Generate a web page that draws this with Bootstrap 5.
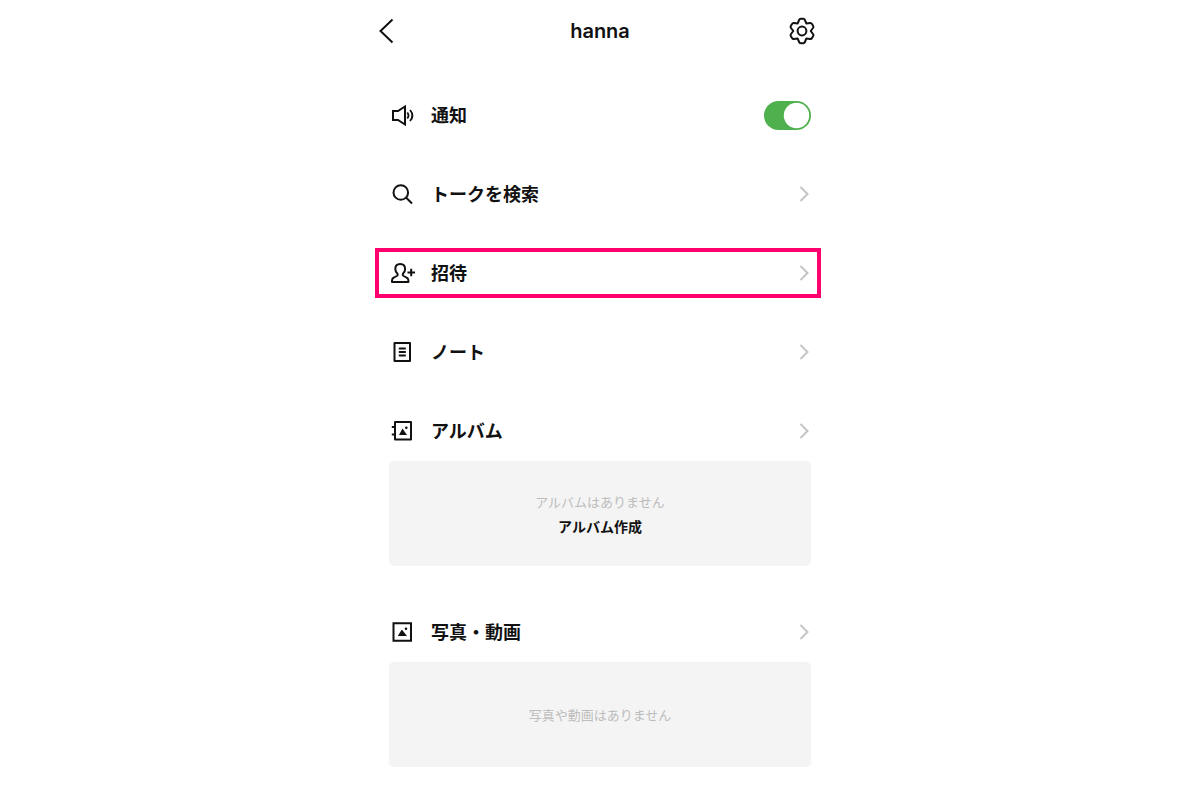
<!DOCTYPE html>
<html lang="ja">
<head>
<meta charset="utf-8">
<meta name="viewport" content="width=device-width, initial-scale=1">
<title>hanna</title>
<link href="https://cdn.jsdelivr.net/npm/bootstrap@5.3.0/dist/css/bootstrap.min.css" rel="stylesheet">
<style>
  body { font-family: "Noto Sans CJK JP", sans-serif; color: #111; background: #fff; }
  .chat-menu { max-width: 450px; }
  .menu-header { display: grid; grid-template-columns: 1fr auto 1fr; height: 62px; }
  .menu-title { font: 600 20px/28px Inter, sans-serif; }
  .icon-button { border: 0; background: none; padding: 0; color: inherit; line-height: 0; }
  .menu-body { padding: 28px 4px 32px 0; }
  .menu-row { display: flex; align-items: center; height: 50px; padding: 0 10px 0 14px; color: #111;
    font-size: 18px; line-height: 26px; font-weight: 600; text-decoration: none; }
  .menu-row > span, .menu-row > label { padding-bottom: 2px; }
  .menu-row + .menu-row { margin-top: 29px; }
  .menu-row.marked { border: 4px solid #ff006e; padding: 0 6px 0 10px; }
  .menu-icon { width: 28px; height: 28px; margin-right: 14px; flex: none; }
  .line { fill: none; stroke: currentColor; stroke-width: 2; }
  .chevron { width: 14px; height: 18px; margin-left: auto; stroke: #c4c4c4; stroke-width: 2; fill: none; }
  .form-check-input.menu-switch { width: 47px; height: 29px; margin: 0 0 0 auto; border: 0; border-radius: 15px; background-position: right center; }
  .form-check-input.menu-switch:checked { background-color: #4fb04e;
    background-image: url("data:image/svg+xml,%3csvg xmlns='http://www.w3.org/2000/svg' viewBox='0 0 29 29'%3e%3ccircle cx='14.5' cy='14.5' r='12.7' fill='white'/%3e%3c/svg%3e"); }
  .empty-panel { margin: 5px 10px 0 14px; min-height: 105px; background: #f4f4f4; border-radius: 5px; }
  .empty-note { font-size: 13px; line-height: 24px; color: #bdbdbd; }
  .create-button { border: 0; background: none; padding: 0; color: #111; font-size: 14px; line-height: 24px; font-weight: 700; }
  .media-group { margin-top: 41px; }
</style>
</head>
<body>
<main class="chat-menu mx-auto">
  <header class="menu-header align-items-center">
    <button class="icon-button text-start ps-1" aria-label="戻る">
      <svg width="15" height="26" viewBox="0 0 15 26"><path class="line" d="M13.5 1.5 1.5 13l12 11.500"/></svg>
    </button>
    <h1 class="menu-title m-0">hanna</h1>
    <button class="icon-button text-end pe-2" aria-label="設定">
      <svg width="30" height="30" viewBox="0 0 30 30"><g class="line" stroke-linejoin="round"><path d="M13.800 2.800h2.400Q17.400 2.800 17.900 4L19.300 7.400 23.200 6.900Q24.400 6.800 25 7.900L26.200 9.900Q26.800 11 26 12L23.700 15 26 18Q26.800 19 26.200 20.100L25 22.100Q24.400 23.200 23.200 23.100L19.300 22.600 17.900 26Q17.400 27.200 16.200 27.200H13.800Q12.600 27.200 12.100 26L10.700 22.600 6.800 23.100Q5.600 23.200 5 22.100L3.800 20.100Q3.200 19 4 18L6.300 15 4 12Q3.200 11 3.800 9.900L5 7.900Q5.600 6.800 6.800 6.900L10.700 7.400 12.100 4Q12.600 2.800 13.800 2.800z"/><circle cx="15" cy="15" r="4.400"/></g></svg>
    </button>
  </header>

  <div class="menu-body">
    <div class="menu-row">
      <svg class="menu-icon" viewBox="0 0 28 28" aria-hidden="true"><g class="line"><path d="M4 10h5l7-4.500v18L9 19H4z"/><path d="M18.300 11.500q2.400 3 0 6M21 9q4.800 5.500 0 11" stroke-width="1.800"/></g></svg>
      <label for="notify">通知</label>
      <input class="form-check-input menu-switch" type="checkbox" role="switch" id="notify" checked>
    </div>
    <a class="menu-row" href="#">
      <svg class="menu-icon" viewBox="0 0 28 28" aria-hidden="true"><g class="line"><circle cx="11.800" cy="12.500" r="7.300"/><path d="m17 17.500 6 6"/></g></svg>
      <span>トークを検索</span>
      <svg class="chevron" viewBox="0 0 14 18" aria-hidden="true"><path d="m3.500 2 7 7-7 7"/></svg>
    </a>
    <a class="menu-row marked" href="#">
      <svg class="menu-icon" viewBox="0 0 28 28" aria-hidden="true"><path class="line" stroke-linejoin="round" d="M3 23v-1.500c0-1.500.5-2.300 2-3l3.500-2v-1.700C7 13.500 6.300 11.800 6.300 10c0-3 1.900-5 4.900-5s4.900 2 4.900 5c0 1.800-.7 3.500-2.200 4.800v1.700l3.500 2c1.500.7 2 1.500 2 3V23z"/><path class="line" d="M18.500 13.500H26M22.200 9.800v7.400"/></svg>
      <span>招待</span>
      <svg class="chevron" viewBox="0 0 14 18" aria-hidden="true"><path d="m3.500 2 7 7-7 7"/></svg>
    </a>
    <a class="menu-row" href="#">
      <svg class="menu-icon" viewBox="0 0 28 28" aria-hidden="true"><path class="line" stroke-linejoin="round" d="M5.500 5h15.500v18H5.500zM9.800 10.500h7M9.800 14h7M9.800 17.500h7"/></svg>
      <span>ノート</span>
      <svg class="chevron" viewBox="0 0 14 18" aria-hidden="true"><path d="m3.500 2 7 7-7 7"/></svg>
    </a>
    <a class="menu-row" href="#">
      <svg class="menu-icon" viewBox="0 0 28 28" aria-hidden="true"><path class="line" stroke-linejoin="round" d="M6 5h16v17.500H6zM2.800 10H6M2.800 17.500H6"/><path d="m10 18 3.500-6.500L18 18z" fill="currentColor"/><circle cx="17.300" cy="10.800" r="1.300" fill="currentColor"/></svg>
      <span>アルバム</span>
      <svg class="chevron" viewBox="0 0 14 18" aria-hidden="true"><path d="m3.500 2 7 7-7 7"/></svg>
    </a>
    <section class="empty-panel d-flex flex-column align-items-center justify-content-center">
      <p class="empty-note m-0">アルバムはありません</p>
      <button class="create-button">アルバム作成</button>
    </section>

    <div class="media-group">
      <a class="menu-row" href="#">
        <svg class="menu-icon" viewBox="0 0 28 28" aria-hidden="true"><path class="line" d="M4.500 5.300H22v17.400H4.500z"/><path d="m8.800 18 4-6.500L18 18z" fill="currentColor"/><circle cx="17" cy="10.800" r="1.300" fill="currentColor"/></svg>
        <span>写真・動画</span>
        <svg class="chevron" viewBox="0 0 14 18" aria-hidden="true"><path d="m3.500 2 7 7-7 7"/></svg>
      </a>
      <section class="empty-panel d-flex align-items-center justify-content-center">
        <p class="empty-note m-0">写真や動画はありません</p>
      </section>
    </div>
  </div>
</main>
<script src="https://cdn.jsdelivr.net/npm/bootstrap@5.3.0/dist/js/bootstrap.bundle.min.js"></script>
</body>
</html>
